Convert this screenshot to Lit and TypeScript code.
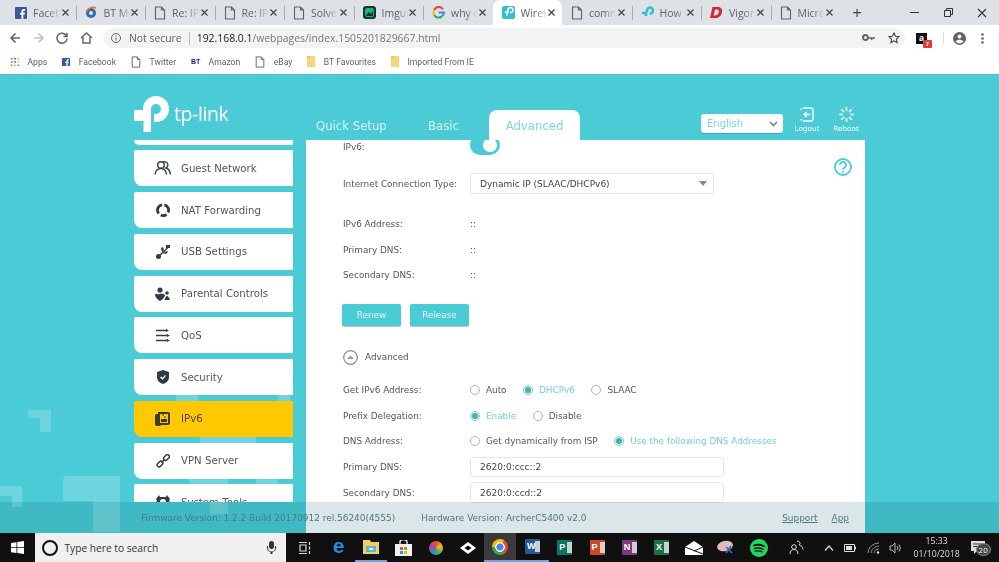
import { LitElement, html, css } from "lit";
import { customElement } from "lit/decorators.js";

const doc = html`<svg class="ic" width="12" height="14" viewBox="0 0 12 14" fill="none" stroke="#5f6368" stroke-width="1.1"><path d="M1.5 1h6l3 3v9h-9zM7.5 1v3h3"/></svg>`;
const fb = (s: number) => html`<svg class="ic" width="${s}" height="${s}" viewBox="0 0 12 12"><rect width="12" height="12" rx="1" fill="#3b5998"/><path d="M8.3 12V7.5h1.5l.2-1.8H8.3V4.6c0-.5.2-.9.9-.9h1V2.1C9.9 2 9.400 2 8.800 2 7.400 2 6.500 2.800 6.500 4.300v1.400H5v1.800h1.500V12z" fill="#fff"/></svg>`;
const tabIcons = [
  fb(12),
  html`<svg class="ic" width="13" height="13" viewBox="0 0 13 13"><circle cx="6" cy="7" r="5" fill="#2a6fb0"/><path d="M1 6c2-4 7-6 10-4" stroke="#e8762c" stroke-width="1.600" fill="none"/><circle cx="6" cy="7" r="2" fill="#dfeaf3"/></svg>`,
  doc, doc, doc,
  html`<svg class="ic" width="13" height="13" viewBox="0 0 13 13"><rect width="13" height="13" rx="3" fill="#16352c"/><rect x="2" y="2" width="9" height="9" rx="2" fill="#1bb76e"/><path d="M3 9l3-3 2 2 2-3v5H3z" fill="#16352c"/></svg>`,
  html`<svg class="ic" width="13" height="13" viewBox="0 0 13 13" fill="none" stroke-width="2"><path d="M11 3.300A5 5 0 0 0 2.200 4" stroke="#ea4335"/><path d="M2.200 4a5 5 0 0 0 0 5" stroke="#fbbc05"/><path d="M2.200 9a5 5 0 0 0 8 1" stroke="#34a853"/><path d="M6.500 6.500H12a5 5 0 0 1-1.800 3.500" stroke="#4285f4"/></svg>`,
  html`<svg class="ic" width="13" height="13" viewBox="0 0 13 13"><rect width="13" height="13" rx="2" fill="#35bfcc"/><path d="M3 6h3V4a2.500 2.500 0 1 1 2 2.500M5 6v3.500" stroke="#fff" stroke-width="1.600" fill="none"/></svg>`,
  doc,
  html`<svg class="ic" width="13" height="13" viewBox="0 0 13 13" fill="none" stroke="#35bfcc" stroke-width="2.600"><path d="M5 10V6M1 7h5M6 6V4.500a3 3 0 1 1 2.500 3"/></svg>`,
  html`<svg class="ic" width="13" height="13" viewBox="0 0 13 13"><path d="M2.500 1h5c3.500 0 5 2 4.500 5-.6 4-3.500 6-7 6H0zM5 3.600l-1.500 6H5c2 0 3.500-1 4-3.500.3-1.800-.5-2.500-2-2.500z" fill="#d9252a" fill-rule="evenodd"/></svg>`,
  doc,
];
const tabs = ["Facebook", "BT MyDonut", "Re: IPv6 help", "Re: IPv6 help", "Solved: IPv6", "Imgur: The", "why can't", "Wireless", "community", "How to", "Vigor 130", "Microsoft"];

const folder = html`<svg class="ic" width="10" height="13" viewBox="0 0 10 13"><path d="M0 0h10v13H0z" fill="#f6d776"/><path d="M0 0h4v2H0z" fill="#e8c253"/></svg>`;
const appsGrid = html`<svg class="ic" width="10" height="10" viewBox="0 0 10 10">
  <rect x="0" y="0" width="2" height="2" fill="#d93025"/><rect x="4" y="0" width="2" height="2" fill="#d93025"/><rect x="8" y="0" width="2" height="2" fill="#e8a33d"/>
  <rect x="0" y="4" width="2" height="2" fill="#4285f4"/><rect x="4" y="4" width="2" height="2" fill="#34a853"/><rect x="8" y="4" width="2" height="2" fill="#fbbc05"/>
  <rect x="0" y="8" width="2" height="2" fill="#34a853"/><rect x="4" y="8" width="2" height="2" fill="#fbbc05"/><rect x="8" y="8" width="2" height="2" fill="#4285f4"/>
</svg>`;
const bookmarks = [
  { i: appsGrid, t: "Apps" },
  { i: fb(10), t: "Facebook" },
  { i: doc, t: "Twitter" },
  { i: html`<span class="bt">BT</span>`, t: "Amazon" },
  { i: doc, t: "eBay" },
  { i: folder, t: "BT Favourites" },
  { i: folder, t: "Imported From IE" },
];

const navIcon: Record<string, unknown> = {
  guest: html`<svg width="18" height="16" viewBox="0 0 18 16" fill="none" stroke="#333c46" stroke-width="1.400"><circle cx="7" cy="5" r="3.300"/><path d="M1 14.500c.5-4 3-6 6-6s5 2 5.500 6M9 2a3.300 3.300 0 1 1 3 6c2 .5 4 3 4.500 6.500"/></svg>`,
  nat: html`<svg width="14" height="14" viewBox="0 0 14 14" fill="none" stroke="#333c46" stroke-width="2.800"><path d="M2.800 10.500A5.300 5.300 0 0 1 6 1.800M8.300 1.900A5.300 5.300 0 0 1 12 9.500M10.500 11.300A5.300 5.300 0 0 1 4.800 12"/></svg>`,
  usb: html`<svg width="14" height="14" viewBox="0 0 14 14" fill="#333c46"><circle cx="2.500" cy="11.500" r="2.500"/><path d="M2 11L11 2.500l1 1L3 12zM6 7l-1-4 2-1 1 3zM7 8l3 1 2-2-1-1-2 1z"/><rect x="10" y="0" width="4" height="3"/></svg>`,
  parental: html`<svg width="15" height="14" viewBox="0 0 15 14" fill="#333c46"><circle cx="5" cy="3" r="2.600"/><circle cx="12" cy="6" r="1.800"/><path d="M0 7.500c1-1 2-1 3 0 1-1 6-1 7 .5 0 2-3 5-5 6-2-1-5-4-5-6.500zM9.500 13c.5-2 1.500-4 2.500-4s2.500 2 3 4z"/></svg>`,
  qos: html`<svg width="14" height="13" viewBox="0 0 14 13" fill="none" stroke="#333c46" stroke-width="1.500"><path d="M0 1.500h10M0 6.500h12M0 11.500h12"/><path d="M10 0l3 1.500L10 3zM11 5l3 1.500L11 8zM11 10l3 1.500-3 1.500z" fill="#333c46" stroke="none"/></svg>`,
  security: html`<svg width="12" height="14" viewBox="0 0 12 14"><path d="M6 0l6 2v5c0 3.500-2.500 6-6 7-3.500-1-6-3.500-6-7V2z" fill="#333c46"/><path d="M3.500 7l2 1.800L8.500 5.500" stroke="#fff" stroke-width="1.300" fill="none"/></svg>`,
  ipv6: html`<svg width="15" height="14" viewBox="0 0 15 14"><path d="M3 0h10a2 2 0 0 1 2 2v9a2 2 0 0 1-2 2H3z" fill="#3d3a2a"/><path d="M0 4a2 2 0 0 1 2-2h1v9l3 3H2a2 2 0 0 1-2-2z" fill="#3d3a2a"/><path d="M5 2h8v9H5z" fill="#ffc800"/><path d="M6 7h6v3H6zM6 2.500h3v3h3" fill="#3d3a2a"/></svg>`,
  vpn: html`<svg width="14" height="14" viewBox="0 0 14 14" fill="none" stroke="#333c46" stroke-width="1.500"><rect x="-2.500" y="-2" width="6.500" height="4" rx="2" transform="translate(3.500 10.500) rotate(-45)"/><rect x="-3" y="-2" width="6.500" height="4" rx="2" transform="translate(10.300 3.700) rotate(-45)"/><path d="M5.500 8.500l3-3"/></svg>`,
  tools: html`<svg width="16" height="14" viewBox="0 0 16 14"><path d="M4 0l1 2h6l1-2 3 4-1 2 1 1-1 5-1 2H3l-1-2-1-5 1-1-1-2z" fill="#333c46"/><circle cx="8" cy="7" r="3" fill="#fff"/></svg>`,
};
const nav = [
  { k: "", t: "", c: "stub" },
  { k: "guest", t: "Guest Network" },
  { k: "nat", t: "NAT Forwarding" },
  { k: "usb", t: "USB Settings" },
  { k: "parental", t: "Parental Controls" },
  { k: "qos", t: "QoS" },
  { k: "security", t: "Security" },
  { k: "ipv6", t: "IPv6", c: "on" },
  { k: "vpn", t: "VPN Server" },
  { k: "tools", t: "System Tools" },
];

const office = (c: string, l: string) => html`<span class="off" style="background:${c}">${l}<i></i></span>`;
const apps = [
  html`<span class="edge">e</span>`,
  html`<svg width="16" height="14" viewBox="0 0 16 14"><path d="M0 0h7l1 2h8v12H0z" fill="#f3cf5b"/><rect x="3" y="6" width="10" height="6" fill="#59b4e8"/><rect x="6" y="8" width="4" height="2" fill="#fff"/></svg>`,
  html`<svg width="17" height="16" viewBox="0 0 17 16"><path d="M0 4h17v12H0z" fill="#f2f2f2"/><path d="M5 5V2a3 2 0 0 1 7 0v3" stroke="#f2f2f2" fill="none" stroke-width="1.300"/><rect x="5" y="7" width="3" height="3" fill="#f25022"/><rect x="9" y="7" width="3" height="3" fill="#7fba00"/><rect x="5" y="11" width="3" height="3" fill="#00a4ef"/><rect x="9" y="11" width="3" height="3" fill="#ffb900"/></svg>`,
  html`<span class="swirl"></span>`,
  html`<svg width="16" height="12" viewBox="0 0 16 12"><path d="M8 0l8 6-8 6-8-6z" fill="#fff"/><path d="M8 3.500L11.500 6 8 8.500 4.500 6z" fill="#111"/></svg>`,
  html`<span class="chrm"></span>`,
  office("#2b579a", "W"),
  office("#077568", "P"),
  office("#d24726", "P"),
  office("#80397b", "N"),
  office("#1f7145", "X"),
  html`<svg width="18" height="14" viewBox="0 0 18 14"><path d="M0 6l9-6 9 6v8H0z" fill="#fff"/><path d="M0 6l18 7M18 6L9 10" stroke="#111" fill="none"/></svg>`,
  html`<svg width="18" height="16" viewBox="0 0 18 16"><ellipse cx="8" cy="6" rx="8" ry="5" fill="#e6b9bd" transform="rotate(-12 8 6)"/><path d="M9 7l6 6M14 6l-5 7" stroke="#2f6fd0" stroke-width="1.600"/></svg>`,
  html`<svg width="18" height="18" viewBox="0 0 18 18" fill="none" stroke="#111" stroke-linecap="round"><circle cx="9" cy="9" r="9" fill="#1ed760" stroke="none"/><path d="M4 6.500c3-1 7-1 10 .8" stroke-width="1.800"/><path d="M4.500 9.500c3-.8 6-.6 8.500.8" stroke-width="1.500"/><path d="M5 12.200c2.500-.6 5-.4 7 .7" stroke-width="1.200"/></svg>`,
];

const radio = (t: string, on = false) => html`<span class="opt ${on ? "sel" : ""}"><i class="rd"></i>${t}</span>`;

@customElement("app-root")
export class AppRoot extends LitElement {
  static styles = css`
    :host { display: block; width: 999px; height: 562px; overflow: hidden; font-family: "DejaVu Sans", sans-serif; filter: blur(0.35px); }
    .ic { flex: none; display: block; }
    /* chrome */
    .strip { height: 25px; background: #dee1e6; display: flex; padding-left: 6px; color: #5f6368; font: 10.500px "Open Sans", sans-serif; }
    .tab { width: 69.500px; display: flex; align-items: center; padding-left: 9px; box-sizing: border-box; position: relative; gap: 6px; }
    .tab + .tab::before { content: ""; position: absolute; left: 0; top: 6px; height: 14px; width: 1px; background: #a8abb0; }
    .tab.act { background: #fff; border-radius: 7px 7px 0 0; margin: 0; }
    .tab.act::before, .tab.act + .tab::before { display: none; }
    .tab b { font-weight: 400; width: 27px; overflow: hidden; white-space: nowrap; -webkit-mask-image: linear-gradient(90deg, #000 55%, transparent); mask-image: linear-gradient(90deg, #000 55%, transparent); }
    .tab svg.x { position: absolute; right: 7px; top: 9px; }
    .plus { width: 34px; display: flex; align-items: center; justify-content: center; color: #444; font-size: 17px; }
    .win { margin-left: auto; display: flex; align-items: center; color: #333; }
    .win span { width: 34px; display: flex; justify-content: center; }
    .tool { height: 25px; box-sizing: border-box; display: flex; align-items: center; background: #fff; padding-top: 1px; position: relative; }
    .navb { display: flex; width: 103px; box-sizing: border-box; padding-left: 9px; gap: 11.500px; }
    .omni { width: 802px; height: 20px; box-sizing: border-box; background: #f1f3f4; border-radius: 10px; display: flex; align-items: center; padding: 0 5px 0 7px; font: 10.400px "Open Sans", sans-serif; color: #5f6368; }
    .omni .sp { width: 1px; height: 13px; background: #bbb; margin: 0 7px; }
    .omni b { font-weight: 400; color: #222; }
    .omni em { font-style: normal; color: #777; }
    .omni .end { margin-left: auto; display: flex; align-items: center; gap: 13px; }
    .tool .rest { display: flex; align-items: center; flex: 1; padding-left: 11px; gap: 0; }
    .ext { width: 11px; height: 11px; background: #111; color: #fff; font: 700 9px "Liberation Sans", sans-serif; text-align: center; line-height: 10px; position: relative; }
    .ext i { position: absolute; left: 7px; top: 7px; width: 9px; height: 8px; background: #e53935; font: 700 6px "Liberation Sans", sans-serif; line-height: 8px; border-radius: 1px; }
    .vs { width: 1px; height: 12px; background: #ddd; margin: 0 9px 0 16px; }
    .dots { margin-left: 15px; }
    .marks { height: 24px; box-sizing: border-box; padding-bottom: 1px; background: #fff; display: flex; align-items: center; padding-left: 10px; gap: 14px; font: 8.600px "Roboto", sans-serif; color: #5a5f64; }
    .mk { display: flex; align-items: center; gap: 7.500px; white-space: nowrap; }
    .mk .ic { transform: scale(.85); }
    .bt { font: 900 7px "Liberation Sans", sans-serif; color: #1d1a7c; width: 11px; text-align: center; }
    /* page */
    .page { height: 459px; background: #4acbd6; position: relative; overflow: hidden; border-top: 1px solid #4ec2cd; box-sizing: border-box; }
    .deco { position: absolute; left: 0; top: 0; }
    .inner { position: relative; padding-left: 134px; }
    .head { height: 65px; display: flex; align-items: flex-end; position: relative; }
    .logo { display: flex; width: 182px; align-self: flex-start; margin-top: 20px; color: #fff; font: 500 19.500px/1 "Open Sans", sans-serif; gap: 4px; letter-spacing: -.4px; }
    .logo span { margin-top: 9px; }
    .tabsr { display: flex; align-items: flex-end; color: #d5f3f6; font: 11.700px "DejaVu Sans", sans-serif; }
    .tabsr a { height: 30px; display: flex; align-items: center; box-sizing: border-box; padding-top: 1px; }
    .t1 { width: 112px; }
    .t2 { width: 61px; }
    .t3 { width: 91px; background: #fff; color: #7dd6dd; border-radius: 8px 8px 0 0; justify-content: center; }
    .lang { width: 82px; height: 19px; background: #fff; border-radius: 3px; margin: 0 0 7px 121px; align-self: flex-end; display: flex; align-items: center; justify-content: space-between; padding: 0 5px 0 6px; box-sizing: border-box; color: #7dd6dd; font-size: 10px; box-shadow: 0 1px 0 #36a9b4; }
    .acts { display: flex; align-self: flex-end; margin: 0 0 7px 11px; color: #fff; font-size: 7.300px; gap: 13px; }
    .acts div { display: flex; flex-direction: column; align-items: center; gap: 2px; width: 26px; }
    .body { display: flex; gap: 13px; align-items: flex-start; }
    .side { width: 159px; height: 362px; overflow: hidden; flex: none; display: flex; flex-direction: column; gap: 5.750px; }
    .it { height: 36px; flex: none; background: #fff; border-radius: 2px 0 0 8px; display: flex; align-items: center; color: #555; font-size: 10.200px; }
    .it.stub { height: 4.500px; border-radius: 0 0 0 8px; }
    .it.on { background: #ffc800; color: #4a4433; }
    .it .g { width: 47px; display: flex; justify-content: center; padding-left: 10px; box-sizing: border-box; }
    .panel { width: 559px; height: 393px; background: #fff; flex: none; overflow: hidden; position: relative; color: #555; font-size: 8.850px; }
    .row { display: flex; align-items: center; padding-left: 37px; height: 14px; }
    .row label { width: 127px; flex: none; }
    .tg { width: 30px; height: 20px; background: #4acbd6; border-radius: 10px; position: relative; margin-top: -5px; }
    .r0 { height: 15px; align-items: flex-start; }
    .r0 label { padding-top: 2px; }
    .tg i { position: absolute; right: 3px; top: 3px; width: 14px; height: 14px; background: #fff; border-radius: 50%; }
    .r1 { margin-top: 18px; height: 21px; }
    .sel-b { width: 244px; height: 21px; border: 1px solid #e6e6e6; border-radius: 3px; box-sizing: border-box; display: flex; align-items: center; justify-content: space-between; padding: 0 6px 0 9px; color: #444; font-size: 9px; }
    .tri { width: 0; height: 0; border-left: 4.500px solid transparent; border-right: 4.500px solid transparent; border-top: 5px solid #888; }
    .r2 { margin-top: 23px; }
    .r3 { margin-top: 11.500px; }
    .btns { display: flex; gap: 9px; padding-left: 36px; margin-top: 21.500px; }
    .btn { width: 59px; height: 22px; background: #4acbd6; color: #e6f9fa; border-radius: 2px; display: flex; align-items: center; justify-content: center; box-shadow: 0 1px 1px #bbb; }
    .adv { display: flex; align-items: center; gap: 7px; padding-left: 37px; margin-top: 23.500px; height: 16px; }
    .r4 { margin-top: 18px; }
    .opts { display: flex; gap: 16.500px; }
    .opt { display: flex; align-items: center; gap: 6px; white-space: nowrap; }
    .rd { border: 1px solid #b5b5b5; border-radius: 50%; box-sizing: content-box; position: relative; width: 8px; height: 8px; }
    .sel { color: #6fd0d8; }
    .sel .rd { border-color: #6fd0d8; background: radial-gradient(circle, #3eb7a8 0 2.800px, #fff 3.300px); }
    .r5 { margin-top: 9px; height: 20px; }
    .r6 { margin-top: 5px; height: 21px; }
    .inp { width: 254px; height: 100%; border: 1px solid #e6e6e6; border-radius: 3px; box-sizing: border-box; padding-left: 9px; display: flex; align-items: center; color: #444; font-size: 9px; }
    .r6 .inp { padding-top: 1px; }
    .help { position: absolute; right: 13px; top: 18px; }
    .foot { position: absolute; left: 0; right: 0; bottom: 0; height: 31px; background: rgba(0, 80, 92, .14); display: flex; align-items: center; font-size: 8.950px; color: #4f7880; padding-left: 141px; box-sizing: border-box; }
    .foot .hw { margin-left: 26px; }
    .foot .lnk { margin-left: auto; text-decoration: underline; display: flex; gap: 14px; padding-right: 150px; }
    /* taskbar */
    .task { height: 29px; background: #101010; display: flex; align-items: center; }
    .start { width: 35px; display: flex; justify-content: center; }
    .search { width: 251px; height: 29px; background: #f0f0f0; display: flex; align-items: center; box-sizing: border-box; padding-left: 7px; color: #333; font: 10.200px "Open Sans", sans-serif; gap: 6.500px; position: relative; }
    .search .cr { width: 12px; height: 12px; border: 2px solid #111; border-radius: 50%; }
    .search .mic { position: absolute; right: 10px; top: 8px; }
    .slot { height: 29px; width: 32.300px; display: flex; align-items: center; justify-content: center; flex: none; box-sizing: border-box; }
    .slot.tv { width: 36.500px; }
    .slot.cur { background: #3a3a3a; border-bottom: 2px solid #6fa3d8; }
    .slot.open { border-bottom: 2px solid #6fa3d8; }
    .edge { color: #1f8fe0; font: 700 21px/1 "Liberation Sans", sans-serif; margin-top: -4px; }
    .swirl { width: 14px; height: 14px; border-radius: 50%; background: conic-gradient(#e54e2e, #f5b52e, #61b33a, #2e8bd6, #ba3fa0, #e54e2e); }
    .chrm { width: 16px; height: 16px; border-radius: 50%; background: radial-gradient(circle, #4285f4 0 3.500px, #fff 3.600px 4.800px, transparent 5px), conic-gradient(from 30deg, #ea4335 0 120deg, #34a853 120deg 240deg, #fbbc05 240deg); }
    .off { width: 15px; height: 15px; color: #fff; font: 700 9px/15px "Liberation Sans", sans-serif; display: block; position: relative; padding-left: 2px; box-sizing: border-box; border-radius: 1px; }
    .off i { position: absolute; right: 0; top: 2px; width: 5px; height: 11px; background: #e4e6ea; opacity: .85; }
    .tray { display: flex; align-items: center; flex: 1; color: #ddd; }
    .tray > div { display: flex; justify-content: center; align-items: center; flex: none; }
    .w44 { width: 44px; } .w20 { width: 20px; } .w23 { width: 23px; } .w22 { width: 22px; }
    .clock { width: 60px; font: 8.700px/13px "Open Sans", sans-serif; text-align: center; flex-direction: column; }
    .notif { width: 23px; position: relative; }
    .notif span { position: absolute; left: 9px; top: 2px; width: 13px; height: 11px; font: 8px/11px "Open Sans", sans-serif; border-radius: 50%; background: #444; border: 1px solid #888; text-align: center; color: #fff; }
    .info { margin-right: 7px; }
  `;

  render() {
    const x = html`<svg class="x" width="7" height="7" viewBox="0 0 7 7" stroke="#444" stroke-width="1.200"><path d="M.5.5l6 6M6.500.5l-6 6"/></svg>`;
    return html`
      <div class="strip">
        ${tabs.map((t, i) => html`<div class="tab ${i === 7 ? "act" : ""}">${tabIcons[i]}<b>${t}</b>${x}</div>`)}
        <div class="plus">+</div>
        <div class="win">
          <span><svg width="9" height="9" viewBox="0 0 9 9" stroke="#333"><path d="M0 4.500h9"/></svg></span>
          <span><svg width="9" height="9" viewBox="0 0 9 9" fill="none" stroke="#333"><path d="M.5 2.500h6v6h-6zM2.500 2V.5h6v6H7"/></svg></span>
          <span><svg width="10" height="10" viewBox="0 0 10 10" stroke="#333" stroke-width="1.100"><path d="M1 1l8 8M9 1L1 9"/></svg></span>
        </div>
      </div>
      <div class="tool">
        <div class="navb">
          <svg width="12" height="12" viewBox="0 0 12 12" fill="none" stroke="#5f6368" stroke-width="1.500"><path d="M11 6H2M6.500 1.500L2 6l4.500 4.500"/></svg>
          <svg width="12" height="12" viewBox="0 0 12 12" fill="none" stroke="#bdc1c6" stroke-width="1.500"><path d="M1 6h9M5.500 1.500L10 6l-4.500 4.500"/></svg>
          <svg width="12" height="12" viewBox="0 0 12 12" fill="none" stroke="#5f6368" stroke-width="1.500"><path d="M10.500 4A5 5 0 1 0 11 6.500M11 1v3.500H7.500"/></svg>
          <svg width="13" height="12" viewBox="0 0 13 12" fill="none" stroke="#5f6368" stroke-width="1.400"><path d="M1 6l5.500-5L12 6M3 5v6h7V5"/></svg>
        </div>
        <div class="omni">
          <svg class="info" width="12" height="12" viewBox="0 0 12 12" fill="none" stroke="#5f6368"><circle cx="6" cy="6" r="4.500"/><path d="M6 5.500v3M6 3.500v1"/></svg>
          Not secure<i class="sp"></i><b>192.168.0.1</b><em>/webpages/index.1505201829667.html</em>
          <span class="end">
            <svg width="13" height="8" viewBox="0 0 13 8" fill="#5f6368"><path d="M3.500 0a3.500 3.500 0 1 0 3.300 4.700H9V6h1.500V4.700H13V3.300H6.800A3.500 3.500 0 0 0 3.500 0zm0 2a1.500 1.500 0 1 1 0 3 1.500 1.500 0 0 1 0-3z" fill-rule="evenodd"/></svg>
            <svg width="12" height="12" viewBox="0 0 12 12" fill="none" stroke="#444" stroke-width="1.100"><path d="M6 1l1.500 3.300 3.500.4-2.600 2.400.7 3.500L6 8.800l-3.100 1.800.7-3.500L1 4.700l3.500-.4z"/></svg>
          </span>
        </div>
        <div class="rest">
          <span class="ext">a<i>7</i></span>
          <span class="vs"></span>
          <svg width="13" height="13" viewBox="0 0 13 13" fill="#5f6368"><path d="M6.500 0a6.500 6.500 0 1 0 0 13 6.500 6.500 0 0 0 0-13zm0 2.500a2 2 0 1 1 0 4 2 2 0 0 1 0-4zm0 9a5 5 0 0 1-4-2c.5-1.300 2.700-1.800 4-1.800s3.500.5 4 1.800a5 5 0 0 1-4 2z" fill-rule="evenodd"/></svg>
          <svg class="dots" width="3" height="11" viewBox="0 0 3 11" fill="#5f6368"><circle cx="1.500" cy="1.500" r="1.300"/><circle cx="1.500" cy="5.500" r="1.300"/><circle cx="1.500" cy="9.500" r="1.300"/></svg>
        </div>
      </div>
      <div class="marks">
        ${bookmarks.map((b) => html`<span class="mk">${b.i}${b.t}</span>`)}
      </div>
      <div class="page">
        <svg class="deco" width="999" height="459" fill="#fff" fill-opacity=".2">
          <path d="M28 335h23v22H40v-14H28z"/>
          <path d="M67 401h53v56H93v-31H67a4 4 0 0 1-4-4v-17a4 4 0 0 1 4-4z"/>
          <path d="M0 411h22v21H12v-11H0z"/>
          <rect x="176" y="318" width="22" height="8"/><rect x="278" y="318" width="12" height="8"/>
          <rect x="200" y="361" width="56" height="8"/><rect x="189" y="404" width="39" height="7"/><rect x="256" y="404" width="22" height="7"/>
          <rect x="210" y="426" width="18" height="13"/>
        </svg>
        <div class="inner">
          <div class="head">
            <div class="logo">
              <svg width="36" height="38" viewBox="0 0 36 38" fill="none"><path d="M13 16v-2a9 9 0 1 1 9 9h-2" stroke="#fff" stroke-width="8"/><path d="M0 15h17v22H9.500V26H0z" fill="#fff"/></svg>
              <span>tp-link</span>
            </div>
            <div class="tabsr">
              <a class="t1">Quick Setup</a><a class="t2">Basic</a><a class="t3">Advanced</a>
            </div>
            <div class="lang">English
              <svg width="9" height="6" viewBox="0 0 9 6" fill="none" stroke="#6a8f96" stroke-width="1.600"><path d="M1 1l3.500 3.500L8 1"/></svg>
            </div>
            <div class="acts">
              <div><svg width="14" height="15" viewBox="0 0 14 15" fill="none" stroke="#fff" stroke-width="1.300"><path d="M3 1h8a2 2 0 0 1 2 2v9a2 2 0 0 1-2 2H3"/><path d="M1 3V1.500M1 13.500V12M10 7.500H4M6.500 5L4 7.500 6.500 10" /></svg>Logout</div>
              <div><svg width="15" height="15" viewBox="0 0 15 15" stroke="#fff" stroke-width="1.500"><path d="M7.500 0v4M7.500 11v4M0 7.500h4M11 7.500h4M2.200 2.200L5 5M10 10l2.800 2.800M12.800 2.200L10 5M5 10l-2.800 2.800"/></svg>Reboot</div>
            </div>
          </div>
          <div class="body">
            <div class="side">
              ${nav.map((n) => html`<div class="it ${n.c ?? ""}">${n.k ? html`<span class="g">${navIcon[n.k]}</span>${n.t}` : ""}</div>`)}
            </div>
            <div class="panel">
              <div class="row r0"><label>IPv6:</label><span class="tg"><i></i></span></div>
              <div class="row r1"><label>Internet Connection Type:</label><div class="sel-b">Dynamic IP (SLAAC/DHCPv6)<i class="tri"></i></div></div>
              <div class="row r2"><label>IPv6 Address:</label><span>::</span></div>
              <div class="row r3"><label>Primary DNS:</label><span>::</span></div>
              <div class="row r3"><label>Secondary DNS:</label><span>::</span></div>
              <div class="btns"><span class="btn">Renew</span><span class="btn">Release</span></div>
              <div class="adv">
                <svg width="15" height="15" viewBox="0 0 15 15"><circle cx="7.500" cy="7.500" r="6.800" fill="none" stroke="#8a8a8a" stroke-width="1.200"/><path d="M4 9l3.500-3.500L11 9z" fill="#9a9a9a"/></svg>
                Advanced
              </div>
              <div class="row r4"><label>Get IPv6 Address:</label><div class="opts">${radio("Auto")}${radio("DHCPv6", true)}${radio("SLAAC")}</div></div>
              <div class="row r3"><label>Prefix Delegation:</label><div class="opts">${radio("Enable", true)}${radio("Disable")}</div></div>
              <div class="row r3"><label>DNS Address:</label><div class="opts">${radio("Get dynamically from ISP")}${radio("Use the following DNS Addresses", true)}</div></div>
              <div class="row r5"><label>Primary DNS:</label><div class="inp">2620:0:ccc::2</div></div>
              <div class="row r6"><label>Secondary DNS:</label><div class="inp">2620:0:ccd::2</div></div>
              <svg class="help" width="18" height="18" viewBox="0 0 18 18" fill="none" stroke="#4acbd6" stroke-width="1.800"><circle cx="9" cy="9" r="8"/><path d="M6 7a3 3 0 1 1 4.500 2.500C9.500 10.200 9 10.700 9 11.500"/><path d="M9 13v1.600"/></svg>
            </div>
          </div>
        </div>
        <div class="foot">
          <span>Firmware Version: 1.2.2 Build 20170912 rel.56240(4555)</span>
          <span class="hw">Hardware Version: ArcherC5400 v2.0</span>
          <span class="lnk"><span>Support</span><span>App</span></span>
        </div>
      </div>
      <div class="task">
        <div class="start"><svg width="13" height="13" viewBox="0 0 13 13" fill="#fff"><path d="M0 2l5.500-.8v5H0zM6.300 1L13 0v6.200H6.300zM0 7h5.500v5L0 11.200zM6.300 7H13v6l-6.700-1z"/></svg></div>
        <div class="search"><i class="cr"></i>Type here to search
          <svg class="mic" width="9" height="13" viewBox="0 0 9 13" fill="#333"><rect x="2" y="0" width="5" height="8" rx="2.500"/><path d="M0 5h1v2a3.500 3.500 0 0 0 7 0V5h1v2a4.500 4.500 0 0 1-3.500 4v2h-2v-2A4.500 4.500 0 0 1 0 7z"/></svg>
        </div>
        <div class="slot tv"><svg width="13" height="12" viewBox="0 0 13 12" fill="none" stroke="#ddd" stroke-width="1.200"><path d="M1 .5h8M1 11.500h8M2 3h6v6H2zM11.500 0v3M11.500 4.500v3M11.500 9v3"/></svg></div>
        ${apps.map((a, i) => html`<div class="slot ${i === 5 ? "cur" : ""} ${i === 1 || i === 6 ? "open" : ""}">${a}</div>`)}
        <div class="tray">
          <div class="w44"><svg width="15" height="15" viewBox="0 0 15 15" fill="none" stroke="#ddd"><circle cx="5" cy="7" r="2.300"/><path d="M1 14c0-3 2-4.500 4-4.500S9 11 9 14M8 1.500a2 2 0 1 1 2 3.500M10.500 5.500c2 0 3.500 1.500 3.500 4"/></svg></div>
          <div class="w20"><svg width="10" height="6" viewBox="0 0 10 6" fill="none" stroke="#ddd" stroke-width="1.200"><path d="M1 5.500L5 1l4 4.500"/></svg></div>
          <div class="w23"><svg width="12" height="8" viewBox="0 0 12 8"><path d="M.5.500h10v7H.5z" fill="none" stroke="#ddd"/><rect x="2" y="2" width="6" height="4" fill="#ddd"/><rect x="11" y="2.500" width="1" height="3" fill="#ddd"/></svg></div>
          <div class="w23"><svg width="13" height="12" viewBox="0 0 13 12" fill="none" stroke="#999"><path d="M1 11C1 6 6 1 12 1M4 11c0-3 4-7 8-7M7 11c0-2 2-4 5-4"/><circle cx="11" cy="10.500" r="1.200" fill="#ddd" stroke="none"/></svg></div>
          <div class="w22"><svg width="13" height="12" viewBox="0 0 13 12" fill="none" stroke="#bbb"><path d="M1 4h2l3-3v10L3 8H1zM8 4a3 3 0 0 1 0 4M10 2.500a5.500 5.500 0 0 1 0 7"/></svg></div>
          <div class="clock"><span>15:33</span><span>01/10/2018</span></div>
          <div class="notif"><svg width="15" height="14" viewBox="0 0 15 14" fill="#ddd"><path d="M0 0h14v10H6l-3 3v-3H0z"/><path d="M2 3h10M2 5.500h10" stroke="#333"/></svg><span>20</span></div>
        </div>
      </div>
    `;
  }
}
